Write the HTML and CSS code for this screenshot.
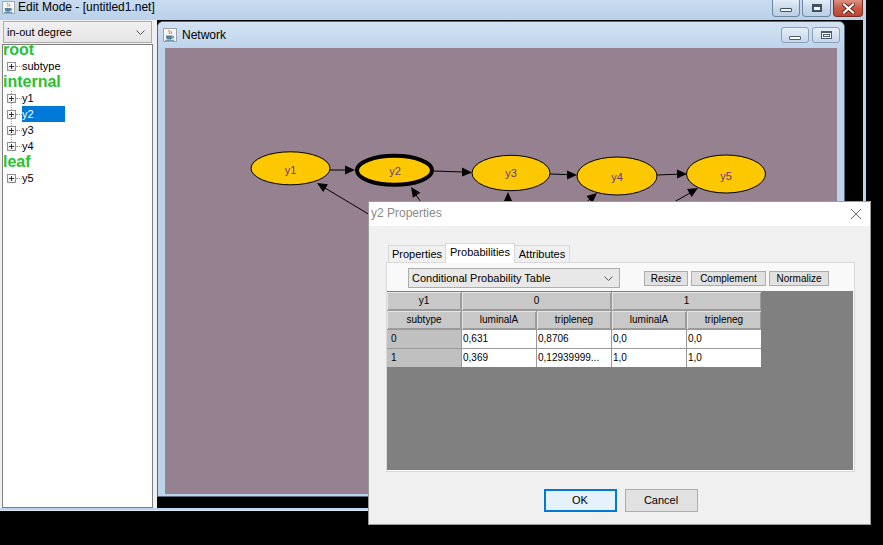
FILE: index.html
```html
<!DOCTYPE html>
<html>
<head>
<meta charset="utf-8">
<title>Edit Mode - [untitled1.net]</title>
<link rel="stylesheet" href="styles.css">
</head>
<body>
<div class="app">
  <div class="titlebar">
    <svg class="app-icon" width="13" height="13" viewBox="0 0 14 14">
      <rect x="0.5" y="0.5" width="13" height="13" fill="#f6f6f6" stroke="#9aa4ae"/>
      <path d="M6.2 1.8c-1.6 1.4 1.4 2.4 0 4.2M8.2 2.8c-1 1 1 1.6 0 3" stroke="#e76f00" fill="none"/>
      <path d="M3 7.6h6.6v1.2c0 2-1.4 2.8-3.3 2.8S3 10.8 3 8.8z" fill="#5382a1"/>
      <path d="M9.6 8.2c1.6 0 1.6 2 0 2" stroke="#5382a1" fill="none"/>
      <path d="M2.2 12.3h9" stroke="#5382a1"/>
    </svg>
    <span class="title">Edit Mode - [untitled1.net]</span>
    <div class="winbtns">
      <div class="wbtn wmin"><span class="g-min"></span></div>
      <div class="wbtn wmax"><span class="g-max"></span></div>
      <div class="wbtn wclose">
        <svg width="13" height="11" viewBox="0 0 13 11">
          <path d="M2 1.5l9 8M11 1.5l-9 8" stroke="#5b2a22" stroke-width="4" stroke-linecap="square"/>
          <path d="M2 1.5l9 8M11 1.5l-9 8" stroke="#fff" stroke-width="2.2" stroke-linecap="square"/>
        </svg>
      </div>
    </div>
  </div>
  <div class="main">
    <div class="left">
      <div class="combo lcombo">
        <span>in-out degree</span>
        <svg class="chev" width="9" height="5" viewBox="0 0 9 5"><path d="M0.5 0.5l4 4 4-4" stroke="#555" fill="none"/></svg>
      </div>
      <div class="tree">
        <div class="tree-inner">
          <div class="heading">root</div>
          <div class="node"><span class="exp"></span><span class="conn"></span><span class="lbl">subtype</span></div>
          <div class="heading">internal</div>
          <div class="group">
            <div class="node"><span class="exp"></span><span class="conn"></span><span class="lbl">y1</span></div>
            <div class="node"><span class="exp"></span><span class="conn"></span><span class="lbl sel">y2</span></div>
            <div class="node"><span class="exp"></span><span class="conn"></span><span class="lbl">y3</span></div>
            <div class="node"><span class="exp"></span><span class="conn"></span><span class="lbl">y4</span></div>
          </div>
          <div class="heading">leaf</div>
          <div class="node"><span class="exp"></span><span class="conn"></span><span class="lbl">y5</span></div>
        </div>
      </div>
    </div>
    <div class="split"></div>
    <div class="desktop">
      <div class="iframe">
        <div class="ititle">
          <svg class="app-icon" width="14" height="14" viewBox="0 0 14 14">
            <rect x="0.5" y="0.5" width="13" height="13" fill="#f6f6f6" stroke="#9aa4ae"/>
            <path d="M6.2 1.8c-1.6 1.4 1.4 2.4 0 4.2M8.2 2.8c-1 1 1 1.6 0 3" stroke="#e76f00" fill="none"/>
            <path d="M3 7.6h6.6v1.2c0 2-1.4 2.8-3.3 2.8S3 10.8 3 8.8z" fill="#5382a1"/>
            <path d="M9.6 8.2c1.6 0 1.6 2 0 2" stroke="#5382a1" fill="none"/>
            <path d="M2.2 12.3h9" stroke="#5382a1"/>
          </svg>
          <span class="ititle-text">Network</span>
          <div class="ibtns">
            <div class="ibtn"><span class="g-imin"></span></div>
            <div class="ibtn"><span class="g-imax"></span></div>
          </div>
        </div>
        <div class="canvas">
          <svg class="graph" width="672" height="446" viewBox="165 48 672 446">
            <g stroke="#000" stroke-width="1" fill="none">
              <line x1="330" y1="170" x2="346" y2="170"/>
              <line x1="433.5" y1="171" x2="463" y2="172"/>
              <line x1="550" y1="174" x2="568" y2="174.6"/>
              <line x1="657" y1="175" x2="678" y2="174.2"/>
              <line x1="380" y1="221" x2="325" y2="188"/>
              <line x1="430" y1="215" x2="416" y2="195"/>
              <line x1="507" y1="230" x2="508" y2="201"/>
              <line x1="560" y1="225" x2="590" y2="199"/>
              <line x1="660" y1="210" x2="690" y2="193"/>
            </g>
            <g fill="#000">
              <polygon points="355,170 345,165.5 345,174.5"/>
              <polygon points="472,172.5 462,167.6 462,176.6"/>
              <polygon points="577,175 567,170.5 567,179.5"/>
              <polygon points="687,174 677,169.5 677,178.5"/>
              <polygon points="317,183 327.9,184.3 323.2,192"/>
              <polygon points="411,187 420.4,192.8 412.9,197.8"/>
              <polygon points="508,192 503.5,202 512.5,202"/>
              <polygon points="597,193 592.4,202.9 586.5,196.1"/>
              <polygon points="698,188 691.6,196.9 687.1,189.1"/>
            </g>
            <g fill="#fdc800" stroke="#000" stroke-width="1">
              <ellipse cx="290.5" cy="168.3" rx="39.5" ry="16.5"/>
              <ellipse cx="394.5" cy="170.3" rx="37.5" ry="14.5" stroke-width="4"/>
              <ellipse cx="511" cy="173" rx="39" ry="17.7"/>
              <ellipse cx="617" cy="176" rx="40" ry="19"/>
              <ellipse cx="726" cy="174" rx="39.5" ry="19"/>
            </g>
            <g class="nlabels" fill="#623a88" text-anchor="middle">
              <text x="290.5" y="174">y1</text>
              <text x="395" y="175">y2</text>
              <text x="511" y="177">y3</text>
              <text x="617" y="180.5">y4</text>
              <text x="726" y="179.5">y5</text>
            </g>
          </svg>
        </div>
      </div>
    </div>
  </div>
</div>

<div class="dialog">
  <div class="dtitle">
    <span class="dtitle-text">y2 Properties</span>
    <svg class="dclose" width="12" height="12" viewBox="0 0 12 12"><path d="M1 1l10 10M11 1L1 11" stroke="#6b6b6b" stroke-width="1"/></svg>
  </div>
  <div class="dbody">
    <div class="tabs">
      <div class="tab t1">Properties</div>
      <div class="tab t2 active">Probabilities</div>
      <div class="tab t3">Attributes</div>
    </div>
    <div class="tabpanel">
      <div class="toolbar">
        <div class="combo dcombo">
          <span>Conditional Probability Table</span>
          <svg class="chev" width="9" height="5" viewBox="0 0 9 5"><path d="M0.5 0.5l4 4 4-4" stroke="#555" fill="none"/></svg>
        </div>
        <div class="tbtns">
          <div class="sbtn b-resize">Resize</div>
          <div class="sbtn b-comp">Complement</div>
          <div class="sbtn b-norm">Normalize</div>
        </div>
      </div>
      <div class="tablearea">
        <div class="cpt">
          <div class="th">y1</div>
          <div class="th span2">0</div>
          <div class="th span2">1</div>
          <div class="th">subtype</div>
          <div class="th">luminalA</div>
          <div class="th">tripleneg</div>
          <div class="th">luminalA</div>
          <div class="th">tripleneg</div>
          <div class="rh">0</div>
          <div class="td">0,631</div>
          <div class="td">0,8706</div>
          <div class="td">0,0</div>
          <div class="td">0,0</div>
          <div class="rh">1</div>
          <div class="td">0,369</div>
          <div class="td">0,12939999...</div>
          <div class="td">1,0</div>
          <div class="td">1,0</div>
        </div>
      </div>
    </div>
    <div class="dbuttons">
      <div class="dbtn ok">OK</div>
      <div class="dbtn cancel">Cancel</div>
    </div>
  </div>
</div>
</body>
</html>
```

FILE: styles.css
```css
* { box-sizing: border-box; }

html, body {
  margin: 0;
  padding: 0;
}

body {
  width: 883px;
  height: 545px;
  background: #000;
  overflow: hidden;
  position: relative;
  font-family: "Liberation Sans", Arial, sans-serif;
  color: #000;
}

/* ---------- main window ---------- */
.app {
  width: 866px;
  height: 511px;
  background: #bcd4ec;
  display: flex;
  flex-direction: column;
  border-bottom: 1px solid #d9e7f5;
}

.titlebar {
  height: 20px;
  display: flex;
  align-items: flex-start;
  background: linear-gradient(#c9dcf0, #bad1ea);
  padding-left: 2px;
  flex: none;
}

.app-icon { display: block; flex: none; }

.titlebar .app-icon { margin-top: 1px; }

.title {
  margin-left: 3px;
  font-size: 12px;
  line-height: 15px;
  color: #000;
}

.winbtns {
  margin-left: auto;
  margin-right: 3px;
  display: flex;
  gap: 2px;
}

.wbtn {
  height: 17px;
  border: 1px solid #6f86a2;
  border-top: none;
  border-radius: 0 0 4px 4px;
  background: linear-gradient(#e4edf7, #c8d8ea 55%, #bcd0e6);
  display: flex;
  align-items: center;
  justify-content: center;
}

.wmin { width: 28px; }
.wmax { width: 29px; }
.wclose {
  width: 30px;
  background: linear-gradient(#dc9284, #c95a46 50%, #bd4633);
  border-color: #7a2f25;
}

.g-min {
  width: 12px;
  height: 4px;
  margin-top: 4px;
  background: #fff;
  border: 1px solid #3d5068;
  border-radius: 1px;
}

.g-max {
  width: 10px;
  height: 8px;
  border: 1px solid #3d5068;
  border-top-width: 2px;
  background: #fff;
  box-shadow: inset 0 0 0 1px #3d5068;
  background-clip: padding-box;
  position: relative;
}

.main {
  height: 488px;
  margin-right: 3px;
  display: flex;
  background: #f0f0f0;
  flex: none;
}

/* ---------- left panel ---------- */
.left {
  width: 155px;
  padding: 1px 0 0 2px;
  display: flex;
  flex-direction: column;
  gap: 1px;
  flex: none;
}

.combo {
  display: flex;
  align-items: center;
  border: 1px solid #acacac;
  background: linear-gradient(#f0f0f0, #e5e5e5);
  font-size: 11px;
}

.lcombo {
  margin-left: 1px;
  width: 149px;
  height: 22px;
  padding-left: 3px;
}

.chev { margin-left: auto; display: block; }
.lcombo .chev { margin-right: 6px; }

.tree {
  width: 151px;
  flex: 1;
  background: #fff;
  border: 1px solid #7f7f7f;
}

.tree-inner {
  margin-top: -3px;
}

.heading {
  height: 16px;
  line-height: 16px;
  font-size: 16px;
  font-weight: bold;
  color: #2cc02c;
}

.group { position: relative; }
.group::before {
  content: "";
  position: absolute;
  left: 8px;
  top: 1px;
  bottom: 8px;
  border-left: 1px dotted #9a9a9a;
}

.node {
  height: 16px;
  display: flex;
  align-items: center;
  font-size: 11px;
  position: relative;
}

.exp {
  width: 9px;
  height: 9px;
  margin-left: 4px;
  border: 1px solid #919191;
  background: linear-gradient(#ffffff, #e6e6e6);
  position: relative;
  z-index: 1;
  flex: none;
}
.exp::before {
  content: "";
  position: absolute;
  left: 1px;
  top: 3px;
  width: 5px;
  height: 1px;
  background: #333;
}
.exp::after {
  content: "";
  position: absolute;
  left: 3px;
  top: 1px;
  width: 1px;
  height: 5px;
  background: #333;
}

.conn {
  width: 6px;
  border-top: 1px dotted #9a9a9a;
  flex: none;
}

.lbl {
  height: 16px;
  line-height: 16px;
}

.lbl.sel {
  width: 43px;
  background: #0078d7;
  color: #fff;
}

.split {
  width: 2px;
  flex: none;
  background: #f0f0f0;
}

/* ---------- desktop & network frame ---------- */
.desktop {
  flex: 1;
  background: #000;
  position: relative;
}

.iframe {
  position: absolute;
  left: 0;
  top: 1px;
  width: 688px;
  height: 476px;
  border: 1px solid #56687c;
  border-radius: 6px 6px 0 0;
  background: #bcd3ea;
  display: flex;
  flex-direction: column;
}

.ititle {
  height: 26px;
  flex: none;
  display: flex;
  align-items: center;
  padding: 0 4px 0 5px;
  background: linear-gradient(#d3e2f3, #bed4eb);
  border-radius: 5px 5px 0 0;
}

.ititle-text {
  margin-left: 5px;
  font-size: 12px;
}

.ibtns {
  margin-left: auto;
  display: flex;
  gap: 3px;
}

.ibtn {
  width: 28px;
  height: 16px;
  border: 1px solid #8ba0b8;
  border-radius: 3px;
  background: linear-gradient(#e6eef8, #c6d7ea);
  display: flex;
  align-items: center;
  justify-content: center;
}

.g-imin {
  width: 12px;
  height: 4px;
  margin-top: 5px;
  background: #fff;
  border: 1px solid #4a5d74;
  border-radius: 1px;
}

.g-imax {
  width: 11px;
  height: 8px;
  background: #fff;
  border: 1px solid #4a5d74;
  border-top-width: 2px;
  box-shadow: inset 0 0 0 1px #fff, inset 0 0 0 2px #4a5d74;
}

.canvas {
  flex: 1;
  margin: 0 7px 2px 7px;
  background: #968190;
  overflow: hidden;
}

.graph { display: block; }

.nlabels text {
  font-family: "Liberation Sans", Arial, sans-serif;
  font-size: 11px;
}

/* ---------- dialog ---------- */
.dialog {
  position: absolute;
  left: 368px;
  top: 201px;
  width: 503px;
  height: 324px;
  border: 1px solid #9c9c9c;
  background: #f0f0f0;
  display: flex;
  flex-direction: column;
}

.dtitle {
  height: 24px;
  background: #fff;
  display: flex;
  align-items: center;
  padding: 0 8px 0 2px;
  flex: none;
}

.dtitle-text {
  font-size: 12px;
  color: #8a8a8a;
  margin-top: -2px;
}

.dclose {
  margin-left: auto;
  display: block;
  margin-top: -1px;
}

.dbody {
  flex: 1;
  padding: 17px 15px 0 17px;
  display: flex;
  flex-direction: column;
}

.tabs {
  height: 19px;
  display: flex;
  align-items: flex-end;
  padding-left: 2px;
  position: relative;
  z-index: 1;
}

.tab {
  height: 17px;
  border: 1px solid #d9d9d9;
  border-bottom: none;
  background: #f0f0f0;
  font-size: 11px;
  line-height: 16px;
  text-align: center;
}

.t1 { width: 57px; border-right: none; }
.t2 { width: 70px; }
.t3 { width: 55px; border-left: none; }

.tab.active {
  height: 20px;
  margin-bottom: -1px;
  background: #fff;
  line-height: 16px;
}

.tabpanel {
  width: 469px;
  height: 210px;
  border: 1px solid #d9d9d9;
  background: #f9f9f9;
  display: flex;
  flex-direction: column;
}

.toolbar {
  height: 28px;
  display: flex;
  align-items: flex-start;
  flex: none;
}

.dcombo {
  margin-left: 21px;
  margin-top: 5px;
  width: 212px;
  height: 20px;
  padding-left: 3px;
  background: #e8e8e8;
  border-color: #adadad;
}
.dcombo .chev { margin-right: 6px; }

.tbtns {
  margin-left: 24px;
  margin-top: 8px;
  display: flex;
  gap: 3px;
}

.sbtn {
  height: 15px;
  border: 1px solid #adadad;
  background: #e1e1e1;
  font-size: 10px;
  line-height: 13px;
  text-align: center;
}

.b-resize { width: 44px; }
.b-comp { width: 75px; }
.b-norm { width: 60px; }

.tablearea {
  width: 466px;
  height: 179px;
  background: #808080;
  padding-top: 1px;
}

.cpt {
  display: grid;
  grid-template-columns: repeat(5, 74px);
  grid-auto-rows: 18px;
  gap: 1px;
  width: max-content;
  background: #9a9a9a;
  font-size: 10px;
}

.th {
  background: #c8c8c8;
  box-shadow: inset 1px 1px 0 #e6e6e6, inset -1px -1px 0 #9c9c9c;
  text-align: center;
  line-height: 18px;
}

.span2 { grid-column: span 2; }

.rh {
  background: #c0c0c0;
  line-height: 18px;
  padding-left: 4px;
}

.td {
  background: #fff;
  line-height: 18px;
  padding-left: 1px;
  white-space: nowrap;
  overflow: hidden;
}

.dbuttons {
  margin-top: 17px;
  display: flex;
  justify-content: center;
  gap: 8px;
}

.dbtn {
  width: 73px;
  height: 23px;
  font-size: 11px;
  line-height: 21px;
  text-align: center;
  border: 1px solid #adadad;
  background: #e1e1e1;
}

.dbtn.ok {
  border: 2px solid #0078d7;
  background: #e5f1fb;
  line-height: 19px;
}
```
